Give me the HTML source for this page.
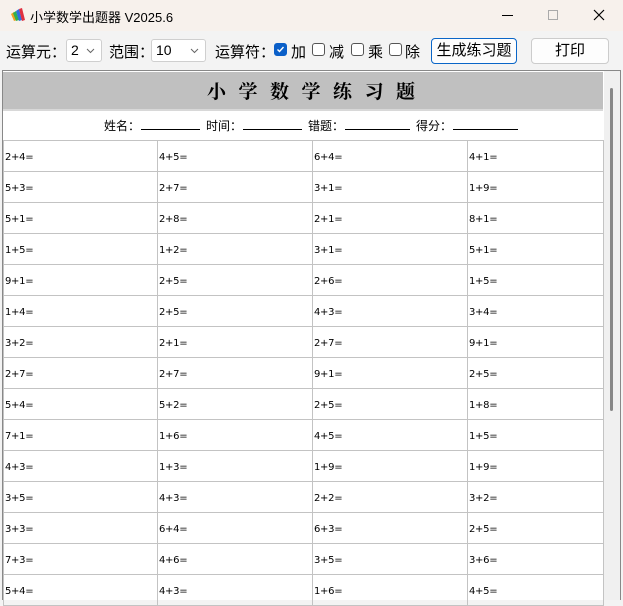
<!DOCTYPE html>
<html><head><meta charset="utf-8"><style>
*{margin:0;padding:0;box-sizing:border-box}
body{width:623px;height:600px;overflow:hidden;background:#f3f3f3;font-family:"Liberation Sans","Noto Sans CJK SC",sans-serif;position:relative;color:#000}
.a{position:absolute}
.tb{left:0;top:0;width:623px;height:31px;background:#f7f1ec}
.t{font-size:13px;top:7px;left:30px}
.lbl{font-size:15px;top:41px}
.sel{top:39px;height:23px;border:1px solid #cfcfcf;background:#fff;border-radius:3px;font-size:14px;padding:2px 4px}
.sel svg{position:absolute;right:6px;top:8px}
.cb{top:43px;width:13px;height:13px;border:1px solid #555;border-radius:3px;background:#fff}
.btn{top:38px;height:26px;border:1px solid #ccc;border-radius:4px;background:#fdfdfd;font-size:15px;text-align:center;line-height:23px}
table{border-collapse:collapse;position:absolute;left:3px;top:140px;table-layout:fixed}
td{border:1px solid #c3c3c3;height:31px;font-size:10px;font-family:"DejaVu Sans","Liberation Sans",sans-serif;padding-left:1px;padding-top:2px;vertical-align:middle;letter-spacing:-0.3px}
</style></head><body>
<div class="a tb"></div>
<svg class="a" style="left:10px;top:7px" width="16" height="16" viewBox="0 0 16 16"><path d="M1 7l3 -2 3 8 -3 1z" fill="#f0a020"/><path d="M3 6l3-2 3 9-3 1z" fill="#30b050"/><path d="M6 4l3-2 3 11-3 1z" fill="#3070e0"/><path d="M9 2l3-1 3 12-3 1z" fill="#e03040"/></svg>
<div class="a t">小学数学出题器 V2025.6</div>
<div class="a" style="left:502px;top:15px;width:11px;height:1px;background:#000"></div>
<div class="a" style="left:548px;top:10px;width:10px;height:10px;border:1px solid #aaa"></div>
<svg class="a" style="left:593px;top:9px" width="12" height="12"><path d="M1 1L11 11M11 1L1 11" stroke="#000" stroke-width="1.2"/></svg>
<div class="a lbl" style="left:6px">运算元：</div>
<div class="a sel" style="left:66px;width:36px">2<svg width="9" height="6"><path d="M1 1l3.5 3.5L8 1" stroke="#666" fill="none"/></svg></div>
<div class="a lbl" style="left:109px">范围：</div>
<div class="a sel" style="left:151px;width:55px">10<svg width="9" height="6"><path d="M1 1l3.5 3.5L8 1" stroke="#666" fill="none"/></svg></div>
<div class="a lbl" style="left:215px">运算符：</div>
<div class="a cb" style="left:274px;background:#0a5fc8;border-color:#0a5fc8"><svg width="11" height="11" style="position:absolute;left:0;top:0"><path d="M2.5 5.5l2 2 4-4.5" stroke="#fff" stroke-width="1.4" fill="none"/></svg></div>
<div class="a lbl" style="left:291px">加</div>
<div class="a cb" style="left:312px"></div><div class="a lbl" style="left:329px">减</div>
<div class="a cb" style="left:351px"></div><div class="a lbl" style="left:368px">乘</div>
<div class="a cb" style="left:389px"></div><div class="a lbl" style="left:405px">除</div>
<div class="a btn" style="left:431px;width:86px;border:1px solid #0a66c8">生成练习题</div>
<div class="a btn" style="left:531px;width:78px">打印</div>
<div class="a" style="left:2px;top:70px;width:619px;height:530px;border:1px solid #888;border-bottom:none;background:#f0f0f0"></div>
<div class="a" style="left:3px;top:71px;width:601px;height:529px;background:#fff"></div>
<div class="a" style="left:3px;top:72px;width:600px;height:37px;background:#c0c0c0"></div>
<div class="a" style="left:207px;top:72px;height:37px;font-family:'Noto Serif CJK SC',serif;font-weight:bold;font-size:19px;line-height:37px;letter-spacing:12.5px;white-space:nowrap">小学数学练习题</div>
<div class="a" style="left:3px;top:109px;width:600px;height:2px;background:#d8d8d8"></div>
<div class="a" style="left:104px;top:117px;font-size:12px;white-space:nowrap">姓名：</div>
<div class="a" style="left:141px;top:129px;width:59px;height:1px;background:#000"></div>
<div class="a" style="left:206px;top:117px;font-size:12px;white-space:nowrap">时间：</div>
<div class="a" style="left:243px;top:129px;width:59px;height:1px;background:#000"></div>
<div class="a" style="left:308px;top:117px;font-size:12px;white-space:nowrap">错题：</div>
<div class="a" style="left:345px;top:129px;width:65px;height:1px;background:#000"></div>
<div class="a" style="left:416px;top:117px;font-size:12px;white-space:nowrap">得分：</div>
<div class="a" style="left:453px;top:129px;width:65px;height:1px;background:#000"></div>
<table>
<colgroup><col style="width:154px"><col style="width:155px"><col style="width:155px"><col style="width:136px"></colgroup>
<tr><td>2+4=</td><td>4+5=</td><td>6+4=</td><td>4+1=</td></tr>
<tr><td>5+3=</td><td>2+7=</td><td>3+1=</td><td>1+9=</td></tr>
<tr><td>5+1=</td><td>2+8=</td><td>2+1=</td><td>8+1=</td></tr>
<tr><td>1+5=</td><td>1+2=</td><td>3+1=</td><td>5+1=</td></tr>
<tr><td>9+1=</td><td>2+5=</td><td>2+6=</td><td>1+5=</td></tr>
<tr><td>1+4=</td><td>2+5=</td><td>4+3=</td><td>3+4=</td></tr>
<tr><td>3+2=</td><td>2+1=</td><td>2+7=</td><td>9+1=</td></tr>
<tr><td>2+7=</td><td>2+7=</td><td>9+1=</td><td>2+5=</td></tr>
<tr><td>5+4=</td><td>5+2=</td><td>2+5=</td><td>1+8=</td></tr>
<tr><td>7+1=</td><td>1+6=</td><td>4+5=</td><td>1+5=</td></tr>
<tr><td>4+3=</td><td>1+3=</td><td>1+9=</td><td>1+9=</td></tr>
<tr><td>3+5=</td><td>4+3=</td><td>2+2=</td><td>3+2=</td></tr>
<tr><td>3+3=</td><td>6+4=</td><td>6+3=</td><td>2+5=</td></tr>
<tr><td>7+3=</td><td>4+6=</td><td>3+5=</td><td>3+6=</td></tr>
<tr><td>5+4=</td><td>4+3=</td><td>1+6=</td><td>4+5=</td></tr>
</table>
<div class="a" style="left:610px;top:88px;width:3px;height:323px;background:#888;border-radius:2px"></div>
</body></html>
